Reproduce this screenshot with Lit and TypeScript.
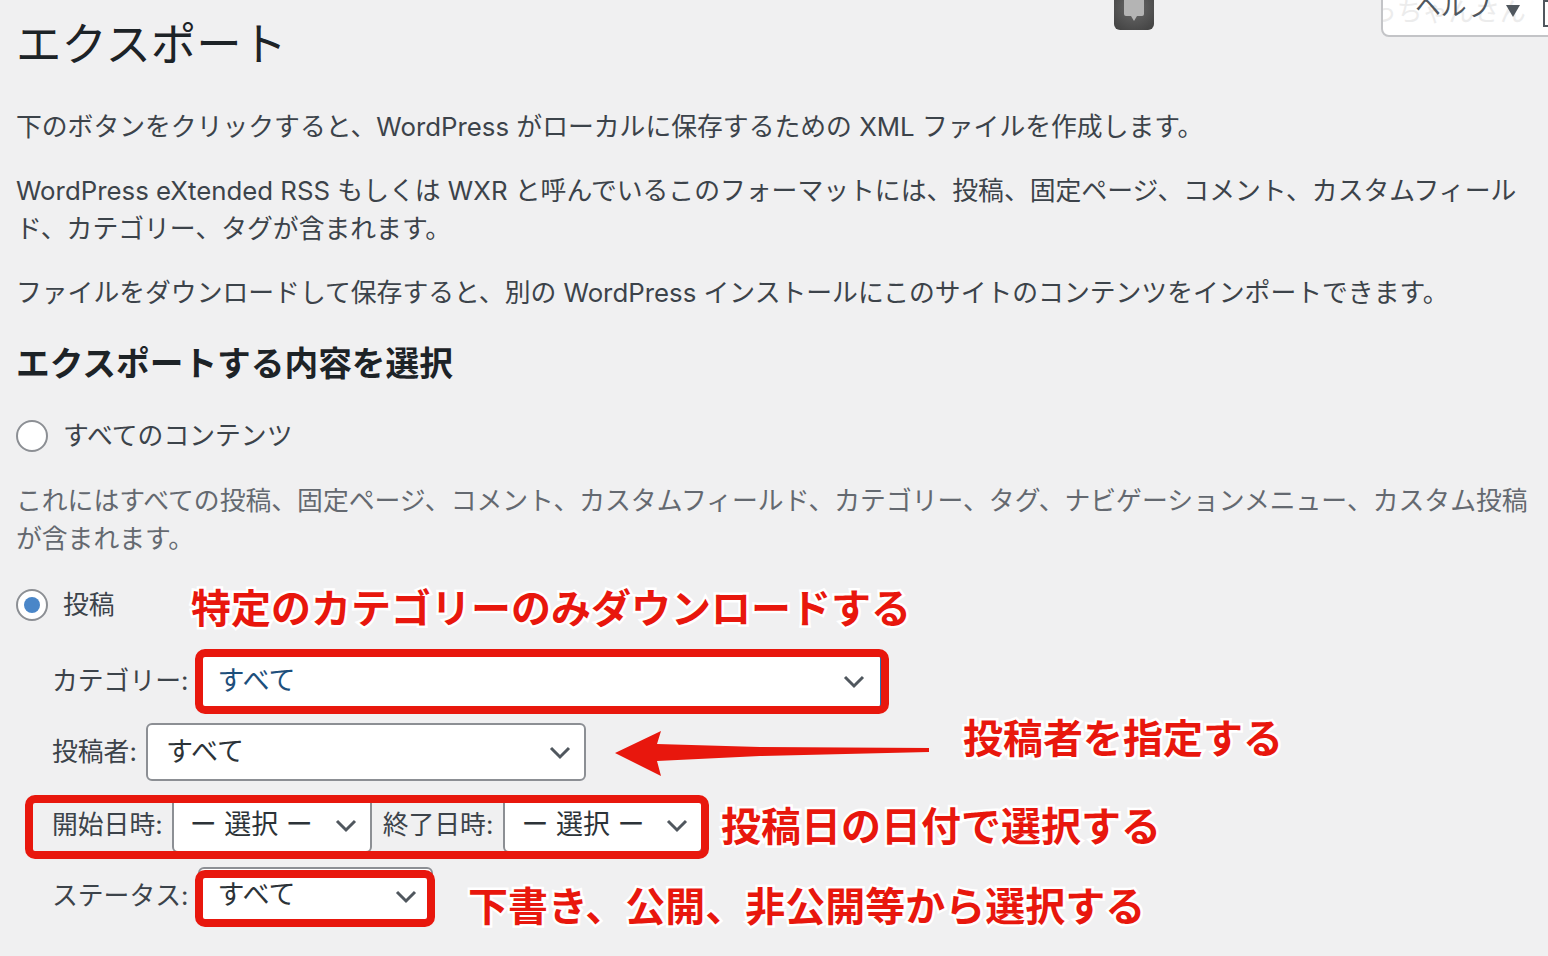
import { LitElement, html, css, svg } from "lit";
import { customElement } from "lit/decorators.js";

interface Note {
  text: string;
  x: number;
  y: number;
}

interface Frame {
  x: number;
  y: number;
  w: number;
  h: number;
}

const NOTES: Note[] = [
  { text: "特定のカテゴリーのみダウンロードする", x: 191, y: 578 },
  { text: "投稿者を指定する", x: 963, y: 708 },
  { text: "投稿日の日付で選択する", x: 721, y: 796 },
  { text: "下書き、公開、非公開等から選択する", x: 468, y: 876 },
];

const FRAMES: Frame[] = [
  { x: 195, y: 649, w: 694, h: 65 },
  { x: 25, y: 795, w: 684, h: 64 },
  { x: 195, y: 870, w: 240, h: 57 },
];

const chevron = svg`<svg class="chev" width="24" height="16" viewBox="0 0 24 16">
  <path d="M3 4l9 9 9-9" fill="none" stroke="#50575e" stroke-width="3"/>
</svg>`;

@customElement("app-root")
export class AppRoot extends LitElement {
  static styles = css`
    :host {
      display: block;
      position: relative;
      width: 1548px;
      height: 956px;
      overflow: hidden;
      background: #f0f0f1;
      color: #3c434a;
      font-family: "Inter", "Noto Sans CJK JP", sans-serif;
      font-size: 25.82px;
      line-height: 38px;
    }
    .wrap {
      padding: 17px 0 0 16px;
      white-space: nowrap;
    }
    h1 {
      margin: 0 0 35px;
      font-size: 45.4px;
      font-weight: 400;
      line-height: 56px;
      color: #1d2327;
    }
    p {
      margin: 0 0 26px;
    }
    h2 {
      margin: 32px 0 32px;
      font-size: 33.7px;
      font-weight: 700;
      line-height: 40px;
      color: #1d2327;
    }
    .radio-row {
      display: flex;
      align-items: center;
      gap: 15px;
      height: 40px;
    }
    .radio {
      box-sizing: border-box;
      width: 32px;
      height: 32px;
      border: 2px solid #8c8f94;
      border-radius: 50%;
      background: #fff;
      display: flex;
      align-items: center;
      justify-content: center;
    }
    .radio.on::after {
      content: "";
      width: 16px;
      height: 16px;
      border-radius: 50%;
      background: #4a86c8;
    }
    .desc {
      margin: 26px 0 27px;
      color: #646970;
    }
    .fields {
      list-style: none;
      margin: 27px 0 0;
      padding: 0 0 0 36px;
      display: flex;
      flex-direction: column;
    }
    .fields li {
      display: flex;
      align-items: center;
      gap: 9px;
    }
    .fields li.cat {
      margin-bottom: 13px;
    }
    .fields li.author {
      margin-bottom: 16px;
    }
    .fields li.dates {
      margin-bottom: 14px;
    }
    .fields li.dates .second {
      margin-left: 2px;
      margin-right: 1px;
    }
    .select {
      box-sizing: border-box;
      height: 58px;
      padding: 0 12px 0 18px;
      display: flex;
      align-items: center;
      justify-content: space-between;
      background: #fff;
      border: 2px solid #8c8f94;
      border-radius: 6px;
      color: #2c3338;
      font-size: 27px;
    }
    .select.focus {
      color: #1d4f7c;
      border-color: #2271b1;
      padding-right: 14px;
    }
    .select.short {
      height: 56px;
    }
    .select.up span {
      position: relative;
      top: -1px;
    }
    .chev {
      flex: none;
    }
    .w-cat {
      width: 684px;
    }
    .w-author {
      width: 440px;
    }
    .w-date {
      width: 200px;
      padding-left: 16px;
      padding-right: 12px;
    }
    .w-status {
      width: 235px;
      padding-right: 13px;
    }
    .note {
      position: absolute;
      font-family: "Noto Sans CJK JP", sans-serif;
      font-size: 40px;
      font-weight: 700;
      line-height: 56px;
      white-space: nowrap;
      color: #e8170d;
      -webkit-text-stroke: 5px #fff;
      paint-order: stroke fill;
    }
    .frame {
      position: absolute;
      box-sizing: border-box;
      border: 8px solid #e8170d;
      border-radius: 10px;
    }
    .arrow {
      position: absolute;
      left: 610px;
      top: 725px;
    }
    .bell {
      position: absolute;
      left: 1114px;
      top: -8px;
      width: 40px;
      height: 38px;
      border-radius: 6px;
      background: radial-gradient(circle at 50% 40%, #6b6b6b, #3f3f3f);
      display: flex;
      justify-content: center;
    }
    .help {
      position: absolute;
      left: 1381px;
      top: -8px;
      width: 180px;
      height: 45px;
      box-sizing: border-box;
      background: #fff;
      border: 2px solid #c3c4c7;
      border-radius: 0 0 8px 8px;
      overflow: hidden;
    }
    .help .ghost {
      position: absolute;
      left: -12px;
      top: -1px;
      color: #ececec;
      white-space: nowrap;
    }
    .help .label {
      position: absolute;
      left: 32px;
      top: -6px;
      color: #50575e;
      white-space: nowrap;
    }
    .help .caret {
      position: absolute;
      left: 122px;
      top: 10px;
    }
    .help .box {
      position: absolute;
      left: 160px;
      top: 6px;
      width: 20px;
      height: 27px;
      box-sizing: border-box;
      border: 2px solid #50575e;
      background: #fff;
    }
  `;

  render() {
    return html`
      <div class="wrap">
        <h1>エクスポート</h1>
        <p>下のボタンをクリックすると、WordPress がローカルに保存するための XML ファイルを作成します。</p>
        <p>
          WordPress eXtended RSS もしくは WXR と呼んでいるこのフォーマットには、投稿、固定ページ、コメント、カスタムフィール<br />ド、カテゴリー、タグが含まれます。
        </p>
        <p>ファイルをダウンロードして保存すると、別の WordPress インストールにこのサイトのコンテンツをインポートできます。</p>
        <h2>エクスポートする内容を選択</h2>
        <div class="radio-row">
          <span class="radio"></span>
          <span>すべてのコンテンツ</span>
        </div>
        <p class="desc">
          これにはすべての投稿、固定ページ、コメント、カスタムフィールド、カテゴリー、タグ、ナビゲーションメニュー、カスタム投稿<br />が含まれます。
        </p>
        <div class="radio-row">
          <span class="radio on"></span>
          <span>投稿</span>
        </div>
        <ul class="fields">
          <li class="cat">
            <span>カテゴリー:</span>
            <div class="select focus w-cat"><span>すべて</span>${chevron}</div>
          </li>
          <li class="author">
            <span>投稿者:</span>
            <div class="select w-author"><span>すべて</span>${chevron}</div>
          </li>
          <li class="dates">
            <span>開始日時:</span>
            <div class="select short w-date"><span>ー 選択 ー</span>${chevron}</div>
            <span class="second">終了日時:</span>
            <div class="select short w-date"><span>ー 選択 ー</span>${chevron}</div>
          </li>
          <li>
            <span>ステータス:</span>
            <div class="select up w-status"><span>すべて</span>${chevron}</div>
          </li>
        </ul>
      </div>

      ${FRAMES.map(
        (f) =>
          html`<div
            class="frame"
            style="left:${f.x}px;top:${f.y}px;width:${f.w}px;height:${f.h}px"
          ></div>`
      )}
      ${NOTES.map(
        (n) =>
          html`<div class="note" style="left:${n.x}px;top:${n.y}px">${n.text}</div>`
      )}

      <svg class="arrow" width="325" height="56" viewBox="610 725 325 56">
        <path
          d="M615 753L661 731L657 744L760 747L929 748V752L760 756L657 761L661 776Z"
          fill="#e8170d"
        />
      </svg>

      <div class="bell">
        <svg width="24" height="38" viewBox="0 0 24 38">
          <path
            d="M2 6h20v16a2 2 0 0 1-2 2h-5l-3 5-3-5H4a2 2 0 0 1-2-2z"
            fill="#b4b4b4"
          />
        </svg>
      </div>

      <div class="help">
        <span class="ghost">っちゃんさん</span>
        <span class="label">ヘルプ</span>
        <svg class="caret" width="16" height="14" viewBox="0 0 16 14">
          <path d="M1 1h14L8 13z" fill="#50575e" />
        </svg>
        <span class="box"></span>
      </div>
    `;
  }
}

declare global {
  interface HTMLElementTagNameMap {
    "app-root": AppRoot;
  }
}
